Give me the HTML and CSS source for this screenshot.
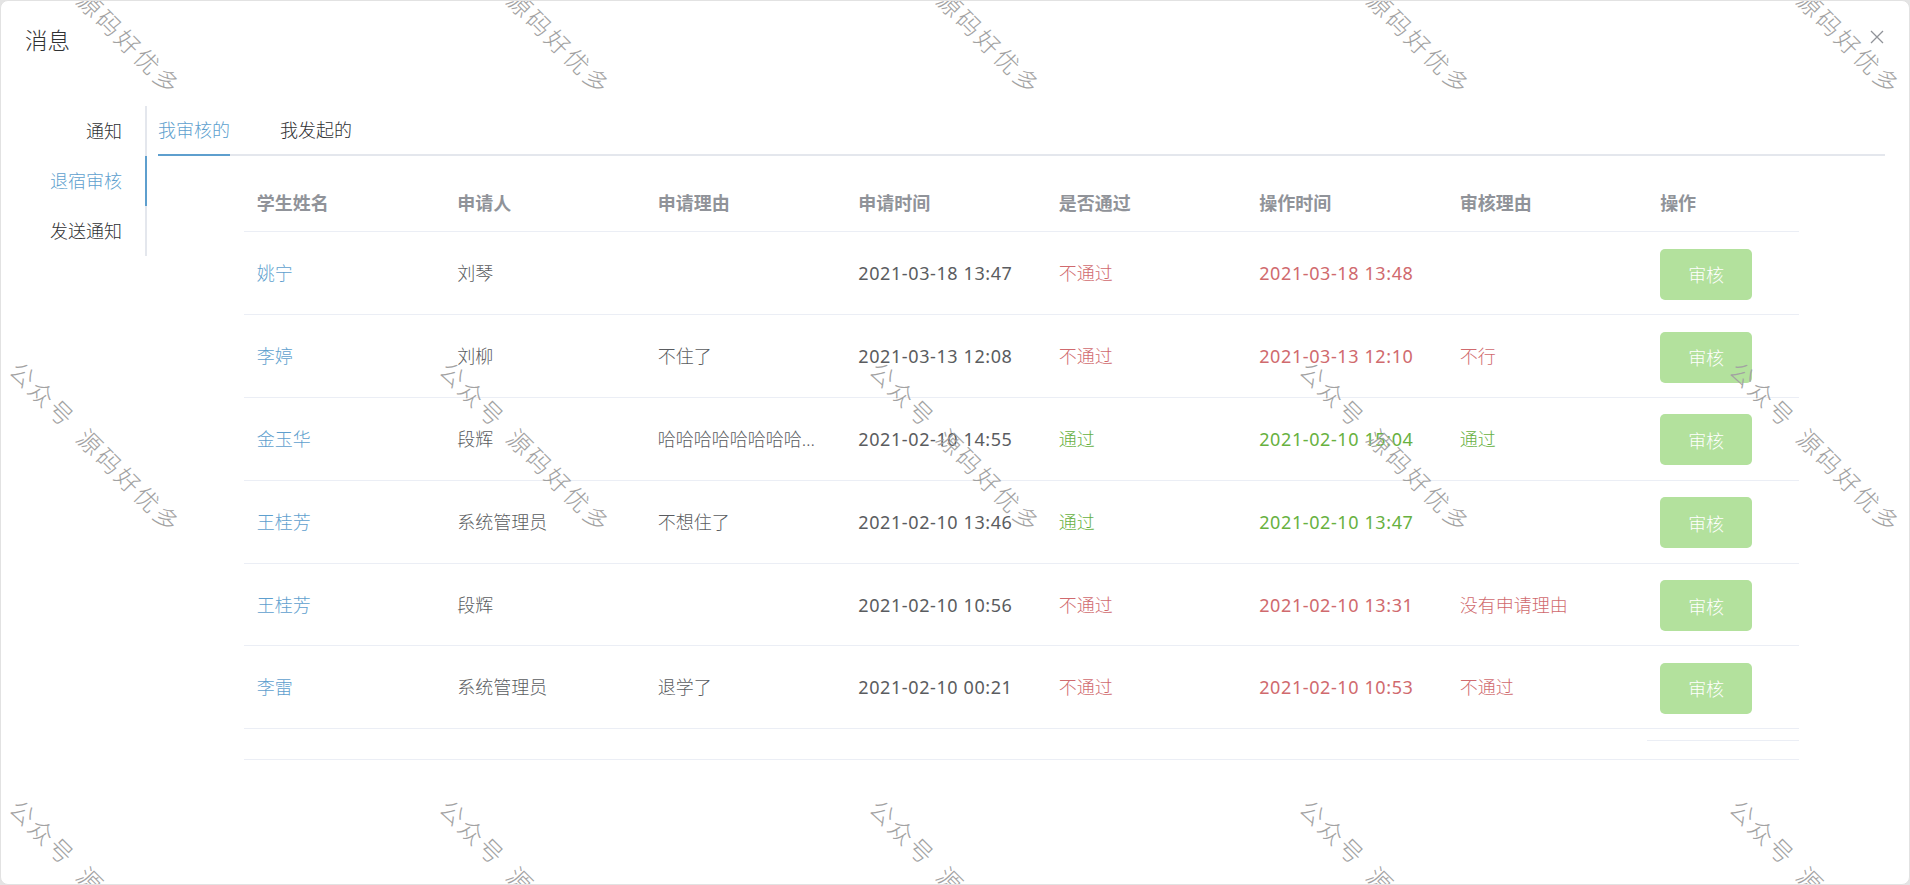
FILE: index.html
```html
<!DOCTYPE html>
<html lang="zh-CN">
<head>
<meta charset="utf-8">
<title>消息</title>
<link rel="stylesheet" href="styles.css">
</head>
<body>
<div class="dialog">
  <header class="dlg-head">
    <span class="dlg-title">消息</span>
    <button class="dlg-close" aria-label="关闭">
      <svg width="14" height="14" viewBox="0 0 14 14"><path d="M1 1 L13 13 M13 1 L1 13" stroke="#909399" stroke-width="1.3" fill="none"/></svg>
    </button>
  </header>
  <div class="dlg-body">
    <nav class="side-tabs">
      <div class="side-item">通知</div>
      <div class="side-item active">退宿审核</div>
      <div class="side-item">发送通知</div>
    </nav>
    <section class="pane">
      <div class="top-tabs">
        <div class="top-item active">我审核的</div>
        <div class="top-item">我发起的</div>
      </div>
      <div class="table">
        <div class="tr th">
          <div class="td">学生姓名</div>
          <div class="td">申请人</div>
          <div class="td">申请理由</div>
          <div class="td">申请时间</div>
          <div class="td">是否通过</div>
          <div class="td">操作时间</div>
          <div class="td">审核理由</div>
          <div class="td">操作</div>
        </div>
        <div class="tr">
          <div class="td name">姚宁</div>
          <div class="td">刘琴</div>
          <div class="td"></div>
          <div class="td num">2021-03-18 13:47</div>
          <div class="td red">不通过</div>
          <div class="td red num">2021-03-18 13:48</div>
          <div class="td red"></div>
          <div class="td"><button class="btn">审核</button></div>
        </div>
        <div class="tr">
          <div class="td name">李婷</div>
          <div class="td">刘柳</div>
          <div class="td">不住了</div>
          <div class="td num">2021-03-13 12:08</div>
          <div class="td red">不通过</div>
          <div class="td red num">2021-03-13 12:10</div>
          <div class="td red">不行</div>
          <div class="td"><button class="btn">审核</button></div>
        </div>
        <div class="tr">
          <div class="td name">金玉华</div>
          <div class="td">段辉</div>
          <div class="td"><span class="clip">哈哈哈哈哈哈哈哈哈哈哈哈哈哈</span></div>
          <div class="td num">2021-02-10 14:55</div>
          <div class="td green">通过</div>
          <div class="td green num">2021-02-10 15:04</div>
          <div class="td green">通过</div>
          <div class="td"><button class="btn">审核</button></div>
        </div>
        <div class="tr">
          <div class="td name">王桂芳</div>
          <div class="td">系统管理员</div>
          <div class="td">不想住了</div>
          <div class="td num">2021-02-10 13:46</div>
          <div class="td green">通过</div>
          <div class="td green num">2021-02-10 13:47</div>
          <div class="td green"></div>
          <div class="td"><button class="btn">审核</button></div>
        </div>
        <div class="tr">
          <div class="td name">王桂芳</div>
          <div class="td">段辉</div>
          <div class="td"></div>
          <div class="td num">2021-02-10 10:56</div>
          <div class="td red">不通过</div>
          <div class="td red num">2021-02-10 13:31</div>
          <div class="td red">没有申请理由</div>
          <div class="td"><button class="btn">审核</button></div>
        </div>
        <div class="tr">
          <div class="td name">李雷</div>
          <div class="td">系统管理员</div>
          <div class="td">退学了</div>
          <div class="td num">2021-02-10 00:21</div>
          <div class="td red">不通过</div>
          <div class="td red num">2021-02-10 10:53</div>
          <div class="td red">不通过</div>
          <div class="td"><button class="btn">审核</button></div>
        </div>
        <div class="tfoot"></div>
      </div>
    </section>
  </div>
  <div class="wm-layer" aria-hidden="true">
    <div class="wm-grid">
      <span class="wm">公众号 源码好优多</span><span class="wm">公众号 源码好优多</span><span class="wm">公众号 源码好优多</span><span class="wm">公众号 源码好优多</span><span class="wm">公众号 源码好优多</span>
      <span class="wm">公众号 源码好优多</span><span class="wm">公众号 源码好优多</span><span class="wm">公众号 源码好优多</span><span class="wm">公众号 源码好优多</span><span class="wm">公众号 源码好优多</span>
      <span class="wm">公众号 源码好优多</span><span class="wm">公众号 源码好优多</span><span class="wm">公众号 源码好优多</span><span class="wm">公众号 源码好优多</span><span class="wm">公众号 源码好优多</span>
    </div>
  </div>
</div>
</body>
</html>
```

FILE: styles.css
```css
* { box-sizing: border-box; }
html, body { margin: 0; padding: 0; }
body {
  width: 1910px;
  height: 885px;
  background: #e4e4e4;
  font-family: "Noto Sans", "Noto Sans CJK SC", sans-serif;
  font-weight: 300;
  color: #5a5c60;
  overflow: hidden;
}
.dialog {
  position: relative;
  width: 1910px;
  height: 885px;
  background: #fff;
  border: 1px solid #e2e2e2;
  border-radius: 8px;
  overflow: hidden;
}
.dlg-head {
  display: flex;
  align-items: center;
  justify-content: space-between;
  padding: 24px 24px 12.5px 24px;
  height: 67.5px;
}
.dlg-title {
  font-size: 22.5px;
  line-height: 30px;
  color: #303133;
}
.dlg-close {
  border: 0;
  background: none;
  padding: 0;
  width: 20px;
  height: 20px;
  display: flex;
  align-items: center;
  justify-content: center;
  margin-top: -8px;
  margin-right: -2px;
}
.dlg-body {
  display: flex;
  align-items: flex-start;
  padding: 37.5px 24px 0 24px;
}
.side-tabs {
  width: 122px;
  border-right: 2px solid #e4e7ed;
  flex: none;
}
.side-item {
  position: relative;
  height: 50px;
  line-height: 50px;
  text-align: right;
  padding-right: 23px;
  font-size: 18px;
  color: #303133;
}
.side-item.active { color: #5e9fce; }
.side-item.active::after {
  content: "";
  position: absolute;
  right: -2px;
  top: 0;
  width: 2px;
  height: 50px;
  background: #5e9fce;
}
.pane {
  flex: 1;
  margin-left: 11px;
}
.top-tabs {
  display: flex;
  height: 50px;
  border-bottom: 2px solid #e4e7ed;
}
.top-item {
  position: relative;
  padding: 0 25px;
  line-height: 48px;
  font-size: 18px;
  color: #303133;
}
.top-item:first-child { padding-left: 0; }
.top-item.active { color: #5e9fce; }
.top-item.active::after {
  content: "";
  position: absolute;
  left: 0;
  right: 25px;
  bottom: -2px;
  height: 2px;
  background: #5e9fce;
}
.table {
  width: 90%;
  margin: 18.75px auto 0 auto;
  font-size: 18px;
}
.tr {
  display: grid;
  grid-template-columns: repeat(7, 1fr) 151px;
  height: 82.85px;
  border-bottom: 1px solid #ebeef5;
  align-items: center;
}
.tr.th {
  height: 57.5px;
  color: #909399;
  font-weight: bold;
}
.td {
  padding: 0 12.5px;
  white-space: nowrap;
  overflow: hidden;
  line-height: 28px;
}
.num { letter-spacing: 0.6px; font-weight: 400; }
.name { color: #5e9fce; }
.red { color: #d06a6e; }
.green { color: #67b13f; }
.clip {
  display: block;
  max-width: 164px;
  overflow: hidden;
  text-overflow: ellipsis;
  white-space: nowrap;
}
.btn {
  border: 0;
  border-radius: 5px;
  background: #b3e19d;
  color: #fff;
  font-family: inherit;
  font-weight: 300;
  font-size: 18px;
  width: 92px;
  height: 51px;
  margin-top: 2px;
}
.tfoot {
  position: relative;
  height: 31px;
  border-bottom: 1px solid #ebeef5;
}
.tfoot::after {
  content: "";
  position: absolute;
  right: 0;
  top: 11px;
  width: 152px;
  height: 1px;
  background: #ebeef5;
}
.wm-layer {
  position: absolute;
  inset: 0;
  overflow: hidden;
  pointer-events: none;
}
.wm-grid {
  position: absolute;
  left: 22px;
  top: -82px;
  display: grid;
  grid-template-columns: repeat(5, 430px);
  grid-auto-rows: 438px;
}
.wm {
  display: block;
  width: 0;
  height: 0;
  white-space: nowrap;
  transform-origin: 0 0;
  transform: rotate(45deg);
  font-family: "Noto Sans CJK SC", sans-serif;
  font-size: 24px;
  line-height: 24px;
  letter-spacing: 3px;
  word-spacing: 6px;
  color: #a2a2a2;
}
```
